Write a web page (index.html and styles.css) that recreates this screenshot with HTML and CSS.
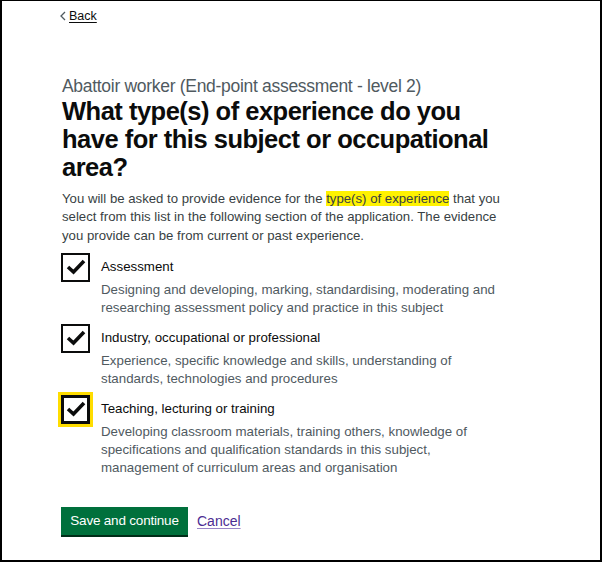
FILE: index.html
```html
<!DOCTYPE html>
<html lang="en">
<head>
<meta charset="utf-8">
<title>Experience types</title>
<link rel="stylesheet" href="styles.css">
</head>
<body>
<div class="frame">
  <main class="content">
    <a class="back-link" href="#">
      <svg class="back-chevron" width="6" height="10" viewBox="0 0 6 10" aria-hidden="true"><path d="M5 1 L1 5 L5 9" fill="none" stroke="#505a5f" stroke-width="1.3"/></svg>
      <span class="back-text">Back</span>
    </a>
    <span class="caption">Abattoir worker (End-point assessment - level 2)</span>
    <h1 class="heading">What type(s) of experience do you have for this subject or occupational area?</h1>
    <p class="lead">You will be asked to provide evidence for the <span class="highlight">type(s) of experience</span> that you select from this list in the following section of the application. The evidence you provide can be from current or past experience.</p>

    <div class="checkboxes">
      <div class="checkbox-item">
        <span class="box"><svg width="20" height="16" viewBox="0 0 20 16"><path d="M2 8 L7.5 13 L18 2" fill="none" stroke="#0b0c0c" stroke-width="3.6"/></svg></span>
        <div class="item-text">
          <div class="label">Assessment</div>
          <div class="hint">Designing and developing, marking, standardising, moderating and researching assessment policy and practice in this subject</div>
        </div>
      </div>
      <div class="checkbox-item">
        <span class="box"><svg width="20" height="16" viewBox="0 0 20 16"><path d="M2 8 L7.5 13 L18 2" fill="none" stroke="#0b0c0c" stroke-width="3.6"/></svg></span>
        <div class="item-text">
          <div class="label">Industry, occupational or professional</div>
          <div class="hint">Experience, specific knowledge and skills, understanding of standards, technologies and procedures</div>
        </div>
      </div>
      <div class="checkbox-item">
        <span class="box focused"><svg width="20" height="16" viewBox="0 0 20 16"><path d="M2 8 L7.5 13 L18 2" fill="none" stroke="#0b0c0c" stroke-width="3.6"/></svg></span>
        <div class="item-text">
          <div class="label">Teaching, lecturing or training</div>
          <div class="hint">Developing classroom materials, training others, knowledge of specifications and qualification standards in this subject, management of curriculum areas and organisation</div>
        </div>
      </div>
    </div>

    <div class="actions">
      <button class="button" type="button">Save and continue</button>
      <a class="cancel" href="#">Cancel</a>
    </div>
  </main>
</div>
</body>
</html>
```

FILE: styles.css
```css
* { box-sizing: border-box; }
html, body { margin: 0; padding: 0; background: #fff; }
body {
  font-family: "Liberation Sans", Arial, sans-serif;
  color: #0b0c0c;
}
.frame {
  width: 602px;
  height: 562px;
  border-top: 1px solid #000;
  border-left: 2px solid #000;
  border-right: 2px solid #000;
  border-bottom: 2px solid #000;
  padding: 7px 0 0 58px;
}
.content {
  width: 470px;
  display: flex;
  flex-direction: column;
  align-items: flex-start;
}
.back-link {
  display: flex;
  align-items: center;
  gap: 3px;
  color: #0b0c0c;
  text-decoration: none;
  font-size: 12.5px;
  line-height: 16px;
}
.back-text {
  text-decoration: underline;
  text-decoration-thickness: 1px;
  text-underline-offset: 2px;
}
.caption {
  margin-top: 54px;
  font-size: 17.5px;
  letter-spacing: -0.3px;
  line-height: 16px;
  color: #505a5f;
  margin-left: 2px;
}
.heading {
  margin: 3px 0 0 2px;
  font-size: 25.5px;
  letter-spacing: -0.5px;
  line-height: 28px;
  font-weight: 700;
  width: 440px;
}
.lead {
  margin: 9px 0 0 2px;
  font-size: 13.2px;
  line-height: 18.3px;
  color: #383f43;
  width: 450px;
}
.highlight {
  background: #fff200;
}
.checkboxes {
  margin-top: 8px;
  display: flex;
  flex-direction: column;
  gap: 7px;
}
.checkbox-item {
  display: flex;
  align-items: flex-start;
  gap: 11px;
}
.box {
  width: 29px;
  height: 29px;
  border: 2px solid #0b0c0c;
  display: flex;
  align-items: center;
  justify-content: center;
  flex: none;
  margin-left: 1px;
}
.box.focused {
  outline: 3px solid #ffdd00;
  outline-offset: 0;
  border-width: 3px;
}
.item-text {
  padding-top: 5px;
}
.label {
  font-size: 13.3px;
  line-height: 18px;
  color: #0b0c0c;
}
.hint {
  margin-top: 5px;
  font-size: 13.3px;
  line-height: 18px;
  color: #505a5f;
  width: 410px;
}
.actions {
  margin-top: 30px;
  display: flex;
  align-items: center;
  gap: 9px;
  margin-left: 1px;
}
.button {
  font-family: "Liberation Sans", Arial, sans-serif;
  background: #00703c;
  color: #fff;
  border: 0;
  box-shadow: 0 2px 0 #002d18;
  font-size: 13.5px;
  letter-spacing: -0.2px;
  line-height: 18px;
  white-space: nowrap;
  padding: 0;
  height: 28px;
  width: 127px;
  text-align: center;
}
.cancel {
  color: #4c2c92;
  font-size: 14px;
  text-decoration: underline;
  text-decoration-color: #9a85c8;
  text-underline-offset: 2px;
}
```
